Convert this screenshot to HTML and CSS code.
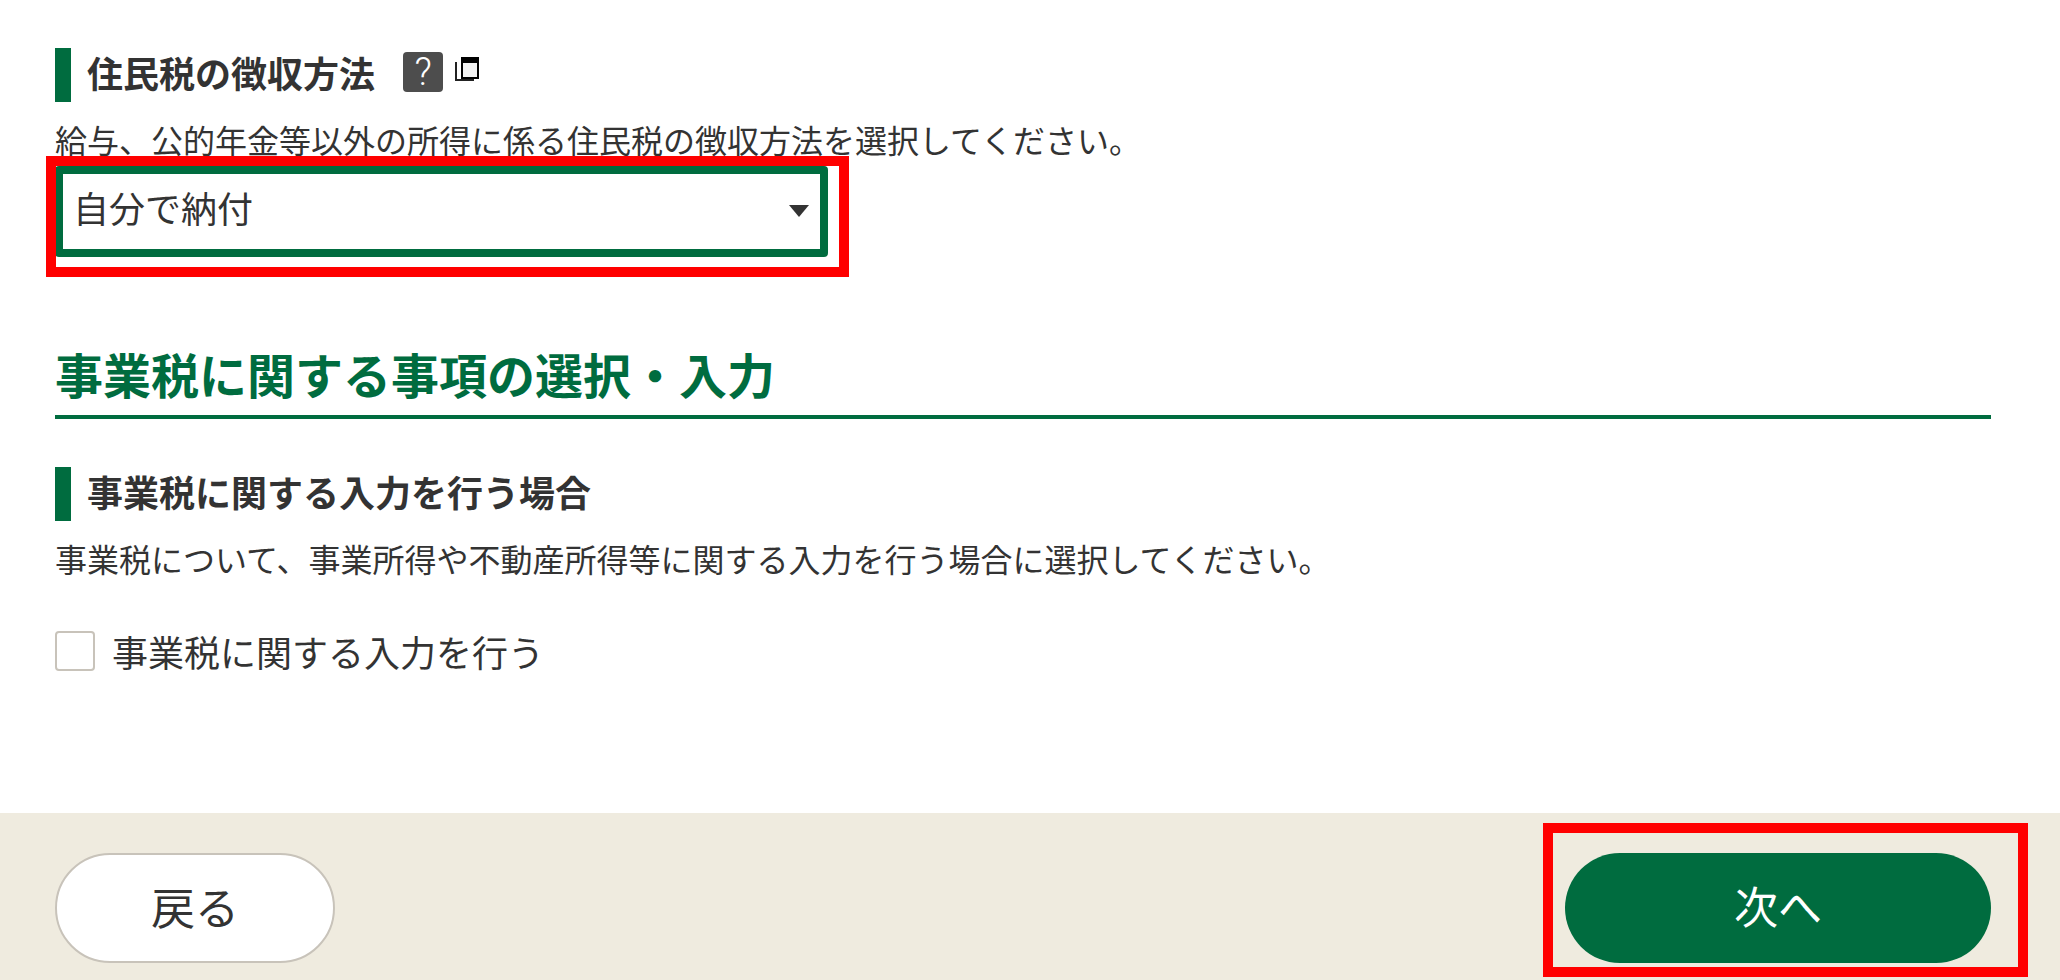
FILE: index.html
```html
<!doctype html>
<html lang="ja">
  <head>
    <meta charset="UTF-8" />
    <title>住民税・事業税に関する事項</title>
    <link rel="stylesheet" href="styles.css">
  </head>
  <body>
    <main class="content">
      <h3 class="field-title">
        住民税の徴収方法
        <span class="help-btn">?</span>
        <svg class="window-icon" width="24" height="24" viewBox="0 0 24 24">
          <path d="M0 5h2v17h17v2H0z" fill="#222" />
          <rect x="6" y="0" width="18" height="22" fill="#000" />
          <rect x="8" y="6" width="14" height="14" fill="#f2f2f2" />
        </svg>
      </h3>
      <p class="field-text">給与、公的年金等以外の所得に係る住民税の徴収方法を選択してください。</p>
      <div class="select-wrap">
        <select class="select">
          <option>自分で納付</option>
          <option>特別徴収</option>
        </select>
        <span class="mark mark-select"></span>
      </div>

      <h2 class="section-title">事業税に関する事項の選択・入力</h2>

      <h3 class="field-title second">事業税に関する入力を行う場合</h3>
      <p class="field-text">事業税について、事業所得や不動産所得等に関する入力を行う場合に選択してください。</p>
      <label class="check-row">
        <input type="checkbox" class="check" />
        事業税に関する入力を行う
      </label>
    </main>

    <footer class="footer">
      <button class="btn btn-back">戻る</button>
      <div class="next-wrap">
        <button class="btn btn-next">次へ</button>
        <span class="mark mark-next"></span>
      </div>
    </footer>
  </body>
</html>
```

FILE: styles.css
```css
* {
  box-sizing: border-box;
}
html,
body {
  margin: 0;
  height: 100%;
}
body {
  display: flex;
  flex-direction: column;
  height: 100vh;
  overflow: hidden;
  background: #fff;
  color: #333;
  font-family: 'Noto Sans CJK JP', 'Noto Sans', sans-serif;
}
.content {
  flex: 1;
  padding: 48px 69px 0 55px;
}
.field-title {
  display: flex;
  align-items: center;
  height: 54px;
  margin: 0;
  padding: 0 0 6px 16px;
  border-left: 16px solid #006c3f;
  font-size: 36px;
  font-weight: 700;
  line-height: 48px;
}
.field-title.second {
  margin-top: 48px;
}
.help-btn {
  display: flex;
  align-items: center;
  justify-content: center;
  width: 40px;
  height: 40px;
  margin: -1px 0 0 28px;
  background: #4d4d4d;
  border-radius: 4px;
  color: #fff;
  font-family: Roboto, sans-serif;
  font-size: 38px;
  font-weight: 300;
  line-height: 40px;
}
.window-icon {
  margin: -7px 0 0 12px;
}
.field-text {
  margin: 13px 0 3px;
  font-size: 32px;
  line-height: 48px;
}
.select-wrap {
  position: relative;
  width: 773px;
  height: 91px;
}
.select-wrap::after {
  content: '';
  position: absolute;
  top: 39px;
  right: 19px;
  border-top: 12px solid #333;
  border-left: 10px solid transparent;
  border-right: 10px solid transparent;
}
.select {
  appearance: none;
  display: block;
  width: 100%;
  height: 100%;
  padding: 0 60px 10px 10px;
  background: #fff;
  border: 8px solid #006c3f;
  border-radius: 4px;
  color: #333;
  font-family: inherit;
  font-size: 36px;
  outline: none;
}
.mark {
  position: absolute;
  border: 10px solid #f00;
  pointer-events: none;
}
.mark-select {
  top: -10px;
  left: -9px;
  width: 803px;
  height: 121px;
}
.section-title {
  margin: 84px 0 0;
  padding-bottom: 10px;
  border-bottom: 4px solid #006c3f;
  color: #006c3f;
  font-size: 48px;
  font-weight: 700;
  line-height: 64px;
}
.check-row {
  display: flex;
  align-items: center;
  gap: 17px;
  margin-top: 49px;
  font-size: 36px;
  line-height: 40px;
}
.check {
  appearance: none;
  width: 40px;
  height: 40px;
  margin: 0;
  background: #fff;
  border: 2px solid #c8c3ba;
  border-radius: 4px;
}
.footer {
  display: flex;
  justify-content: space-between;
  height: 167px;
  padding: 40px 69px 0 55px;
  background: #efebdf;
}
.btn {
  height: 110px;
  padding: 0 0 4px;
  border-radius: 55px;
  font-family: inherit;
  font-size: 44px;
}
.btn-back {
  width: 280px;
  background: #fff;
  border: 2px solid #c8c3ba;
  color: #333;
}
.btn-next {
  width: 426px;
  padding-bottom: 6px;
  background: #006c3f;
  border: none;
  color: #fff;
}
.next-wrap {
  position: relative;
}
.mark-next {
  top: -30px;
  left: -22px;
  width: 485px;
  height: 154px;
}
```
